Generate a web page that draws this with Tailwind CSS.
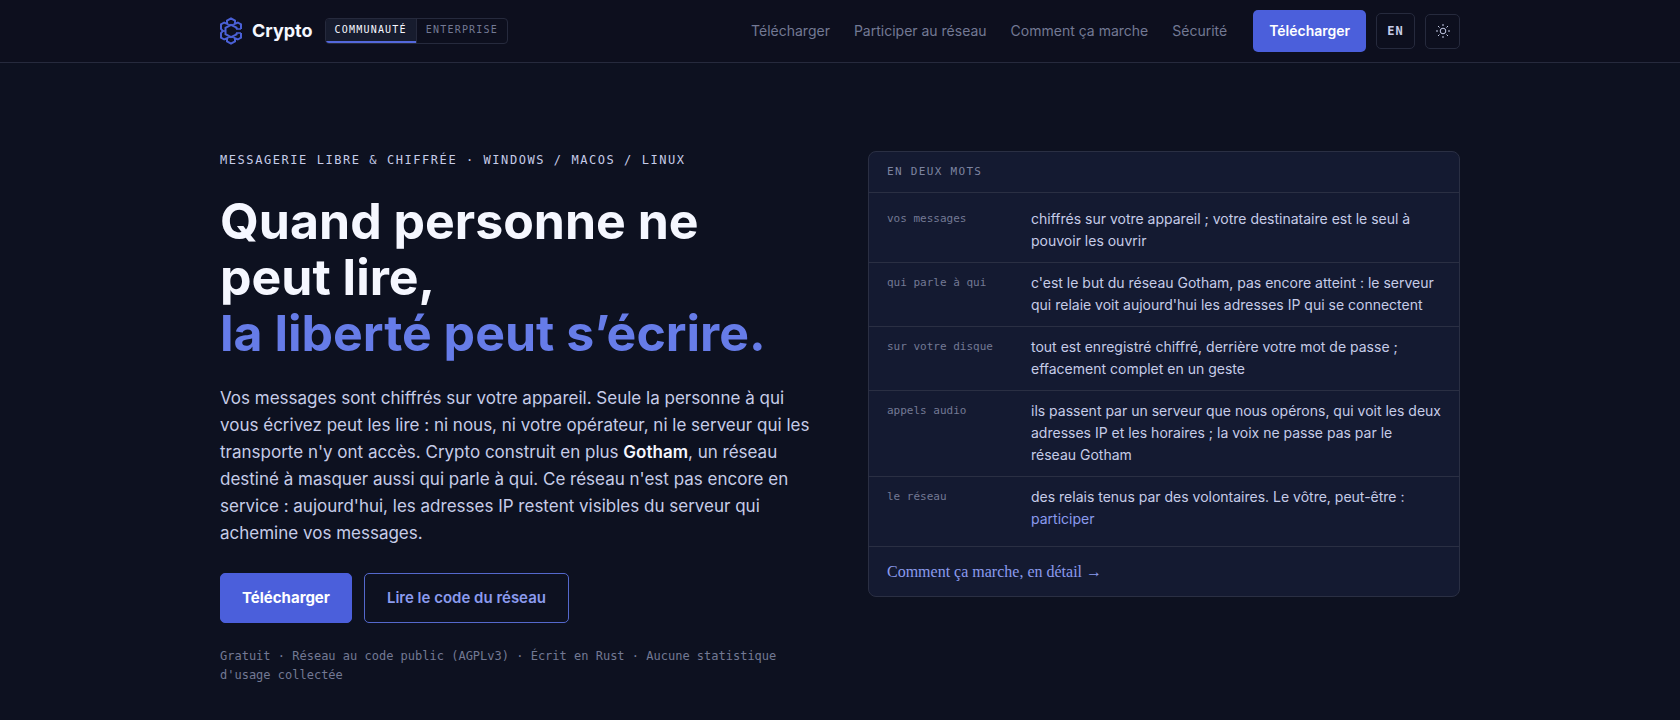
<!doctype html>
<html lang="fr">
  <head>
    <meta charset="UTF-8" />
    <meta name="viewport" content="width=device-width, initial-scale=1.0" />
    <title>Crypto</title>
    <script src="https://cdn.jsdelivr.net/npm/@tailwindcss/browser@4"></script>
  </head>
  <body class="min-h-screen bg-[#0d1120] font-['Inter',sans-serif] text-[#c6cce8]">
    <header class="border-b border-[#262a3d] bg-[#0d0f1e]">
      <div class="mx-auto flex h-[62px] max-w-[1288px] items-center px-6">
        <a href="#" class="flex items-center gap-2.5 text-lg font-bold text-[#f5f7ff]">
          <svg class="h-7 w-[22px]" viewBox="0 0 22 28" fill="none" stroke="#4a60d6" stroke-width="2">
            <!-- petals -->
            <path d="M21 12V7.300L17.800 5.500 15 6.800V3.500L11 1.300 7 3.500V6.800L4.200 5.500 1 7.300v4.500L2.800 14 1 16.200v4.500l3.200 1.800 2.800-1.300v3.300L11 26.700l4-2.200v-3.300l2.800 1.300L21 20.700V16" />
            <path d="M7 6.500 11 8.500l4-2M7 21.500l4-2 4 2" stroke-width="1.300" />
            <!-- letter C -->
            <path d="M16.500 12V10.500L11 7.800 5.500 10.800v6.400L11 20.200l5.500-2.700V16" />
            <path d="M2.500 14h3M16 12h5M16 16h5" stroke-width="1.300" />
          </svg>
          Crypto
        </a>
        <div class="ml-3 flex overflow-hidden rounded border border-[#262a3d] font-['DejaVu_Sans_Mono',monospace] text-[10px] leading-[22px] tracking-[0.12em]">
          <a href="#" class="border-b-2 border-[#5468dc] bg-[#171c2e] px-[9px] text-[#f5f7ff]">COMMUNAUTÉ</a>
          <a href="#" class="border-l border-[#262a3d] px-[9px] text-[#737994]">ENTERPRISE</a>
        </div>
        <nav class="ml-auto flex items-center gap-6 text-sm text-[#737994]">
          <a href="#">Télécharger</a>
          <a href="#">Participer au réseau</a>
          <a href="#">Comment ça marche</a>
          <a href="#">Sécurité</a>
        </nav>
        <div class="ml-[26px] flex items-center gap-2.5">
          <a href="#" class="rounded-[5px] bg-[#4b5fdb] px-4 text-sm leading-[42px] font-semibold text-white">Télécharger</a>
          <a href="#" class="rounded-[5px] border border-[#262a3d] px-2.5 font-['DejaVu_Sans_Mono',monospace] text-xs leading-[34px] font-bold tracking-[0.1em]">EN</a>
          <button type="button" aria-label="Changer de thème" class="flex size-[35px] items-center justify-center rounded-[5px] border border-[#262a3d]">
            <svg class="size-4" viewBox="0 0 16 16" fill="none" stroke="currentColor">
              <circle cx="8" cy="8" r="2.800" />
              <path d="M8 1v2M8 13v2M1 8h2M13 8h2M3 3l1.500 1.500M11.500 11.500 13 13M3 13l1.500-1.500M11.500 4.500 13 3" />
            </svg>
          </button>
        </div>
      </div>
    </header>

    <main class="mx-auto grid max-w-[1288px] grid-cols-2 items-start gap-14 px-6 pt-[88px]">
      <section>
        <p class="font-['DejaVu_Sans_Mono',monospace] text-xs leading-[18px] tracking-[0.13em]">MESSAGERIE LIBRE &amp; CHIFFRÉE · WINDOWS / MACOS / LINUX</p>
        <h1 class="mt-6 text-[50px] leading-[56px] font-bold text-[#f5f7ff]">
          Quand personne ne<br />peut lire,<br />
          <span class="text-[#667ce8]">la liberté peut s’écrire.</span>
        </h1>
        <p class="mt-6 text-[17px] leading-[27px]">
          Vos messages sont chiffrés sur votre appareil. Seule la personne à qui
          vous écrivez peut les lire : ni nous, ni votre opérateur, ni le
          serveur qui les transporte n'y ont accès. Crypto construit en plus
          <strong class="font-semibold text-[#f5f7ff]">Gotham</strong>, un
          réseau destiné à masquer aussi qui parle à qui. Ce réseau n'est pas
          encore en service : aujourd'hui, les adresses IP restent visibles du
          serveur qui achemine vos messages.
        </p>
        <div class="mt-[26px] flex gap-3 text-[15px] leading-[48px]">
          <a href="#" class="rounded-[5px] border border-[#4b5fdb] bg-[#4b5fdb] px-[21px] font-bold text-white">Télécharger</a>
          <a href="#" class="rounded-[5px] border border-[#5468cc] px-[22px] font-semibold text-[#8b9bee]">Lire le code du réseau</a>
        </div>
        <p class="mt-6 font-['DejaVu_Sans_Mono',monospace] text-xs leading-[19px] text-[#737994]">
          Gratuit · Réseau au code public (AGPLv3) · Écrit en Rust · Aucune
          statistique d'usage collectée
        </p>
      </section>

      <aside class="overflow-hidden rounded-lg border border-[#2a2f43] bg-[#141a31]">
        <h2 class="border-b border-[#2a2f43] px-[18px] font-['DejaVu_Sans_Mono',monospace] text-[11px] leading-10 tracking-[0.12em] text-[#7d84a0]">EN DEUX MOTS</h2>
        <dl class="divide-y divide-[#2a2f43] py-1.5 text-sm leading-[22px]">
          <div class="grid grid-cols-[130px_1fr] gap-3.5 px-[18px] pt-[9px] pb-2.5">
            <dt class="font-['DejaVu_Sans_Mono',monospace] text-[11px] text-[#737994]">vos messages</dt>
            <dd>chiffrés sur votre appareil ; votre destinataire est le seul à pouvoir les ouvrir</dd>
          </div>
          <div class="grid grid-cols-[130px_1fr] gap-3.5 px-[18px] pt-[9px] pb-2.5">
            <dt class="font-['DejaVu_Sans_Mono',monospace] text-[11px] text-[#737994]">qui parle à qui</dt>
            <dd>c'est le but du réseau Gotham, pas encore atteint : le serveur qui relaie voit aujourd'hui les adresses IP qui se connectent</dd>
          </div>
          <div class="grid grid-cols-[130px_1fr] gap-3.5 px-[18px] pt-[9px] pb-2.5">
            <dt class="font-['DejaVu_Sans_Mono',monospace] text-[11px] text-[#737994]">sur votre disque</dt>
            <dd>tout est enregistré chiffré, derrière votre mot de passe ; effacement complet en un geste</dd>
          </div>
          <div class="grid grid-cols-[130px_1fr] gap-3.5 px-[18px] pt-[9px] pb-2.5">
            <dt class="font-['DejaVu_Sans_Mono',monospace] text-[11px] text-[#737994]">appels audio</dt>
            <dd>ils passent par un serveur que nous opérons, qui voit les deux adresses IP et les horaires ; la voix ne passe pas par le réseau Gotham</dd>
          </div>
          <div class="grid grid-cols-[130px_1fr] gap-3.5 px-[18px] pt-[9px] pb-2.5">
            <dt class="font-['DejaVu_Sans_Mono',monospace] text-[11px] text-[#737994]">le réseau</dt>
            <dd>des relais tenus par des volontaires. Le vôtre, peut-être : <a href="#" class="text-[#8b9bee]">participer</a></dd>
          </div>
        </dl>
        <div class="border-t border-[#2a2f43] px-[18px] py-3">
          <a href="#" class="font-['Liberation_Serif',serif] text-base text-[#8b9bee]">Comment ça marche, en détail →</a>
        </div>
      </aside>
    </main>
  </body>
</html>
